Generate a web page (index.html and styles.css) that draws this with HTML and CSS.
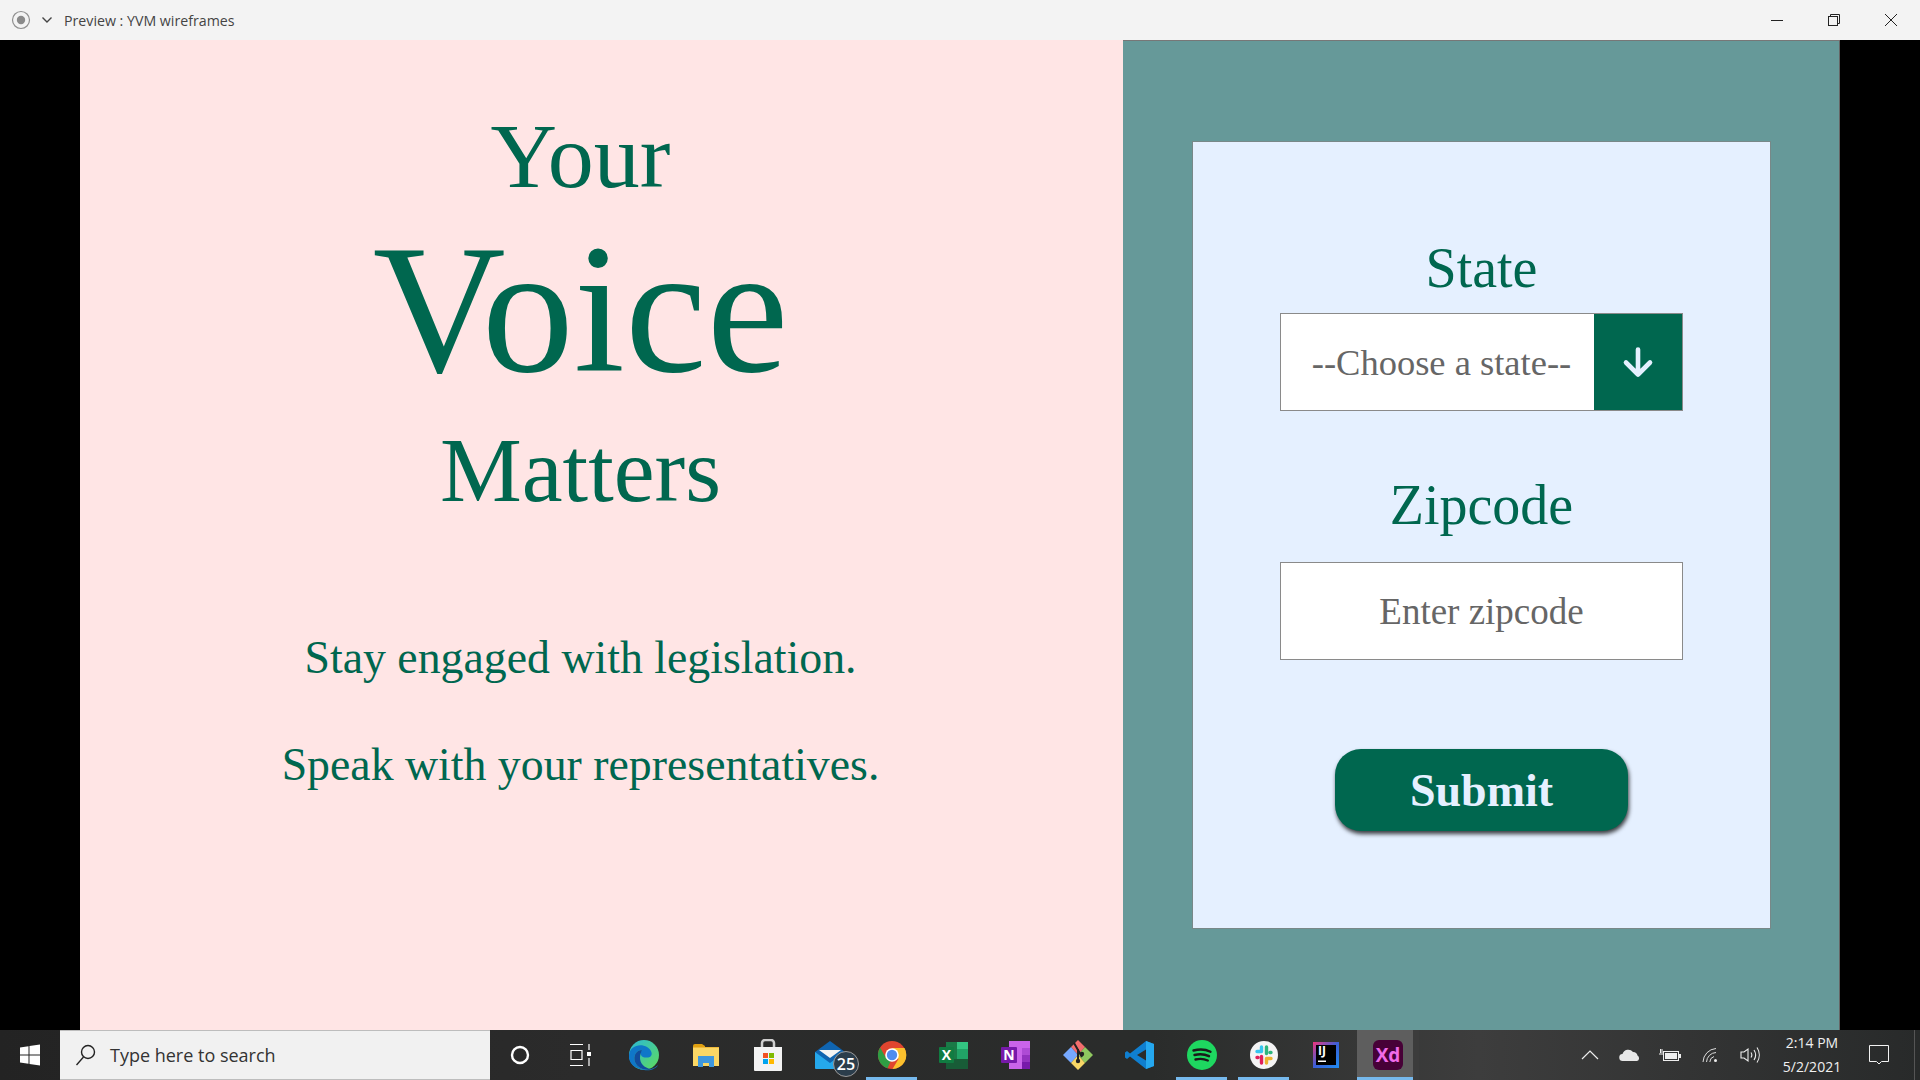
FILE: index.html
```html
<!DOCTYPE html>
<html lang="en">
    <head>
        <meta charset="UTF-8">
        <title>Preview : YVM wireframes</title>
        <link rel="stylesheet" href="styles.css">
    </head>
    <body>
        <header class="titlebar">
            <svg class="record" width="20" height="20" viewBox="0 0 20 20"><circle cx="10" cy="10" r="8.5" fill="none" stroke="#8f8f8f" stroke-width="1.2"/><circle cx="10" cy="10" r="4.2" fill="#8a8a8a"/></svg>
            <svg class="menu-arrow" width="12" height="12" viewBox="0 0 12 12"><path d="M1.5 3.5 6 8l4.5-4.5" fill="none" stroke="#444" stroke-width="1.4"/></svg>
            <span class="title">Preview : YVM wireframes</span>
            <div class="window-buttons">
                <svg width="14" height="14" viewBox="0 0 14 14"><path d="M1 7.500h12" stroke="#222" stroke-width="1"/></svg>
                <svg width="14" height="14" viewBox="0 0 14 14"><path d="M3.500 3V1.500h9v9H11" fill="none" stroke="#222"/><rect x="1.500" y="3.500" width="9" height="9" fill="none" stroke="#222"/></svg>
                <svg width="14" height="14" viewBox="0 0 14 14"><path d="M1 1l12 12M13 1 1 13" stroke="#222" stroke-width="1"/></svg>
            </div>
        </header>

        <main class="stage">
            <section class="hero">
                <h1 class="headline">
                    <span class="line-your">Your</span>
                    <span class="line-voice">Voice</span>
                    <span class="line-matters">Matters</span>
                </h1>
                <p class="tagline tagline-first">Stay engaged with legislation.</p>
                <p class="tagline tagline-second">Speak with your representatives.</p>
            </section>

            <section class="side">
                <form class="card">
                    <h2 class="field-label">State</h2>
                    <div class="field">
                        <span class="field-text field-text-select">--Choose a state--</span>
                        <span class="field-arrow">
                            <svg width="32" height="32" viewBox="0 0 32 32"><path d="M16 3.500v25M4 16.500l12 12 12-12" fill="none" stroke="#e5f0ff" stroke-width="4.600" stroke-linecap="round" stroke-linejoin="round"/></svg>
                        </span>
                    </div>
                    <h2 class="field-label field-label-zip">Zipcode</h2>
                    <div class="field">
                        <span class="field-text">Enter zipcode</span>
                    </div>
                    <button class="submit" type="button">Submit</button>
                </form>
            </section>
        </main>

        <footer class="taskbar">
            <div class="start">
                <svg width="22" height="22" viewBox="0 0 22 22"><path d="M1 3.500 9.500 2.300v8.200H1zM10.500 2.100 21 .6v9.900H10.500zM1 11.500h8.500v8.200L1 18.500zM10.500 11.500H21v9.900l-10.500-1.500z" fill="#fff"/></svg>
            </div>
            <div class="search">
                <svg width="22" height="24" viewBox="0 0 22 24"><circle cx="13" cy="9" r="6.500" fill="none" stroke="#222" stroke-width="1.400"/><path d="M8.500 14 1.500 22" stroke="#222" stroke-width="1.400"/></svg>
                <span>Type here to search</span>
            </div>
            <div class="task-tools">
                <div class="tool">
                    <svg width="20" height="20" viewBox="0 0 20 20"><circle cx="10" cy="10" r="8" fill="none" stroke="#fff" stroke-width="2.400"/></svg>
                </div>
                <div class="tool tool-view">
                    <svg width="22" height="24" viewBox="0 0 22 24"><path d="M1 1.500h13M1 22.500h13M2 7.500h11v9H2zM20 1v6M20 15v8" fill="none" stroke="#fff" stroke-width="1.200"/><rect x="18" y="9" width="4" height="4" fill="#fff"/></svg>
                </div>
            </div>
            <div class="apps">
                <div class="app">
                    <svg width="32" height="32" viewBox="0 0 32 32">
                        <defs>
                            <linearGradient id="edgeTop" x1="0" y1="0" x2="1" y2="1"><stop offset="0" stop-color="#2bb8d8"/><stop offset="1" stop-color="#5fdc5a"/></linearGradient>
                        </defs>
                        <circle cx="16" cy="16" r="15" fill="url(#edgeTop)"/>
                        <path d="M1 16C2 7 12 4 19 8c5 3 6 8 3 10-3 1-8 1-9-2-1-2 0-4 1-5-6 0-9 6-7 12 2 5 8 9 16 7 3-1 5-2 7-4-2 4-8 6-14 5C7 30 0 24 1 16z" fill="#0f77c8"/>
                        <path d="M14 11c-6 0-9 6-7 12 2 5 8 9 16 7-7-1-11-6-11-11 0-3 1-6 2-8z" fill="#114c9c"/>
                    </svg>
                </div>
                <div class="app">
                    <svg width="28" height="24" viewBox="0 0 28 24"><path d="M1 3a2 2 0 0 1 2-2h7l3 2v3H1z" fill="#e0a010"/><path d="M1 4h26v19H1z" fill="#fbd765"/><path d="M1 4h26v1H1z" fill="#f0b93a"/><path d="M6 13h16v11h-5v-4h-6v4H6z" fill="#3f97dd"/></svg>
                </div>
                <div class="app">
                    <svg width="30" height="32" viewBox="0 0 30 32"><path d="M9 9V4a3 3 0 0 1 3-3h6a3 3 0 0 1 3 3v5" fill="none" stroke="#cfcfcf" stroke-width="2.500"/><path d="M1 8h28v23a1 1 0 0 1-1 1H2a1 1 0 0 1-1-1z" fill="#f3f3f3"/><rect x="10" y="14" width="5" height="5" fill="#f25022"/><rect x="16" y="14" width="5" height="5" fill="#7fba00"/><rect x="10" y="20" width="5" height="5" fill="#00a4ef"/><rect x="16" y="20" width="5" height="5" fill="#ffb900"/></svg>
                </div>
                <div class="app">
                    <svg width="32" height="28" viewBox="0 0 32 28"><path d="M16 0 31 11v16H1V11z" fill="#0f64b0"/><path d="M5 9h22l-11 8z" fill="#f4f4f4"/><path d="M1 11l15 11 15-11v16a1 1 0 0 1-1 1H2a1 1 0 0 1-1-1z" fill="#25a8ec"/></svg>
                    <span class="mail-badge">25</span>
                </div>
                <div class="app app-open">
                    <svg width="30" height="30" viewBox="0 0 30 30"><circle cx="15" cy="15" r="14" fill="#e0452f"/><path d="M15 8h12.500a14 14 0 0 1-12 21l6-10z" fill="#fbc02d"/><path d="M3.100 7.500 9 18l6 0-4.500 10.300A14 14 0 0 1 3.100 7.500z" fill="#2f9e44"/><circle cx="15" cy="15" r="6.800" fill="#fff"/><circle cx="15" cy="15" r="5.200" fill="#4f8cf0"/></svg>
                </div>
                <div class="app">
                    <svg width="30" height="28" viewBox="0 0 30 28"><path d="M7 1h22v26a1 1 0 0 1-1 1H8a1 1 0 0 1-1-1z" fill="#1a7a47"/><path d="M18 1h11v7H18z" fill="#33c481"/><path d="M18 8h11v10H18z" fill="#21a366"/><path d="M7 18h22v10H7z" fill="#185c37"/><rect x="0" y="6" width="15" height="16" rx="1" fill="#107c41"/><text x="7.500" y="19" class="badge-letter">X</text></svg>
                </div>
                <div class="app">
                    <svg width="30" height="30" viewBox="0 0 30 30"><path d="M8 1h21v27a1 1 0 0 1-1 1H8z" fill="#ca64ea"/><path d="M21 8h8v7h-8z" fill="#ae4bd5"/><path d="M21 15h8v7h-8z" fill="#9332bf"/><path d="M21 22h8v7h-8z" fill="#7719aa"/><rect x="0" y="7" width="16" height="16" rx="1" fill="#7719aa"/><text x="8" y="20" class="badge-letter">N</text></svg>
                </div>
                <div class="app">
                    <svg width="30" height="30" viewBox="0 0 30 30"><path d="M15 0 22 7 15 15 8 7z" fill="#f26d6d"/><path d="M0 15 8 7 15 15 8 23z" fill="#76a9ff"/><path d="M30 15 22 7 15 15 22 23z" fill="#8fc860"/><path d="M15 30 8 23 15 15 22 23z" fill="#f7d766"/><path d="M11 3l8 14M15 9v12" stroke="#222" stroke-width="2"/><circle cx="15" cy="21" r="2.200" fill="#222"/><circle cx="19" cy="14" r="2.200" fill="#222"/></svg>
                </div>
                <div class="app">
                    <svg width="30" height="30" viewBox="0 0 30 30"><path d="M21 1 29 4V26L21 29 5 16.500 2 19 0 17.500V12.500L2 11 5 13.500zM21 9.500 12 15l9 5.500z" fill="#0f7fd0" fill-rule="evenodd"/><path d="M21 1 29 4V26L21 29z" fill="#25a8ef"/></svg>
                </div>
                <div class="app app-open">
                    <svg width="30" height="30" viewBox="0 0 30 30"><circle cx="15" cy="15" r="15" fill="#1ed760"/><path d="M6.500 10.500c6-1.700 12-1.300 17 1.200M7.500 15c5-1.300 10-1 14.500 1.200M8.500 19.500c4-1 8.500-.8 12.300 1" fill="none" stroke="#1a1a1a" stroke-width="2.400" stroke-linecap="round"/></svg>
                </div>
                <div class="app app-open">
                    <svg width="28" height="28" viewBox="0 0 28 28"><circle cx="14" cy="14" r="14" fill="#f4f4f4"/><g stroke-width="3.400" stroke-linecap="round"><path d="M11.500 6v4.500M11.500 10.500H7" stroke="#36c5f0"/><path d="M16.500 6v6.500M21 11.500h-1" stroke="#2eb67d"/><path d="M16.500 22v-4.500M16.500 17.500H21" stroke="#ecb22e"/><path d="M11.500 22v-6.500M7 16.500h1" stroke="#e01e5a"/></g></svg>
                </div>
                <div class="app">
                    <svg width="26" height="26" viewBox="0 0 26 26"><defs><linearGradient id="ijEdge" x1="0" y1="0" x2="1" y2="1"><stop offset="0" stop-color="#f0357c"/><stop offset="0.500" stop-color="#3a5fd8"/><stop offset="1" stop-color="#1f8cf0"/></linearGradient></defs><rect width="26" height="26" fill="url(#ijEdge)"/><rect x="3" y="3" width="20" height="20" fill="#000"/><text x="5" y="13" class="ij-letters">IJ</text><rect x="5" y="18.500" width="8" height="1.500" fill="#fff"/></svg>
                </div>
                <div class="app app-active">
                    <svg width="30" height="30" viewBox="0 0 30 30"><rect width="30" height="30" rx="6" fill="#470137"/><text x="15" y="22" class="xd-letters">Xd</text></svg>
                </div>
            </div>
            <div class="tray">
                <div class="tray-cell"><svg width="18" height="10" viewBox="0 0 18 10"><path d="M1 9l8-8 8 8" fill="none" stroke="#eee" stroke-width="1.200"/></svg></div>
                <div class="tray-cell"><svg width="22" height="14" viewBox="0 0 22 14"><path d="M4 13a3.500 3.500 0 0 1-.5-7A6 6 0 0 1 14 4a4.500 4.500 0 0 1 4.500 3.500A3 3 0 0 1 18 13z" fill="#e8e8e8"/></svg></div>
                <div class="tray-cell"><svg width="22" height="14" viewBox="0 0 22 14"><rect x="4.500" y="3.500" width="15" height="9" fill="none" stroke="#eee"/><rect x="6" y="5" width="12" height="6" fill="#eee"/><rect x="20" y="6" width="2" height="4" fill="#eee"/><path d="M0 6h4M1.500 1v4M3 1v4" stroke="#eee"/></svg></div>
                <div class="tray-cell"><svg width="16" height="16" viewBox="0 0 16 16"><path d="M1 15A14 14 0 0 1 14 1.500M4.500 15A10 10 0 0 1 14 5.500M7.800 15A6 6 0 0 1 12 9.500" fill="none" stroke="#ddd" stroke-width="1"/><circle cx="13.500" cy="13.500" r="1.500" fill="#eee"/></svg></div>
                <div class="tray-cell"><svg width="21" height="18" viewBox="0 0 21 18"><path d="M1 6h3l4-3v12l-4-3H1zM11 6.500c1 1.500 1 3.500 0 5M14 4c2 3 2 7 0 10M17 1.500c3 4.500 3 10.500 0 15" fill="none" stroke="#eee" stroke-width="1.100"/></svg></div>
                <div class="clock">
                    <span>2:14 PM</span>
                    <span>5/2/2021</span>
                </div>
                <div class="notice"><svg width="20" height="20" viewBox="0 0 20 20"><path d="M.5.500h19v16h-7L10 19l-2.500-2.500h-7z" fill="none" stroke="#f2f2f2"/></svg></div>
                <div class="show-desktop"></div>
            </div>
        </footer>
    </body>
</html>
```

FILE: styles.css
```css
html, body {
    margin: 0;
    height: 100%;
}
body {
    display: flex;
    flex-direction: column;
    height: 1080px;
    overflow: hidden;
    background-color: #000;
    font-family: "Liberation Serif", serif;
}

/* window title */
.titlebar {
    display: flex;
    align-items: center;
    height: 40px;
    flex-shrink: 0;
    padding-left: 11px;
    background-color: #f3f3f3;
}
.menu-arrow {
    margin-left: 10px;
}
.title {
    margin-left: 11px;
    color: #444;
    font-family: "Open Sans", sans-serif;
    font-size: 14.200px;
}
.window-buttons {
    display: flex;
    gap: 43px;
    margin-left: auto;
    padding-right: 22px;
}

/* the wireframe itself */
.stage {
    display: flex;
    flex: 1;
    padding: 0 80px;
    min-height: 0;
}
.hero {
    box-sizing: border-box;
    width: 1043px;
    padding-right: 42px;
    background-color: #ffe5e5;
    color: #00674f;
    text-align: center;
}
.headline {
    display: flex;
    flex-direction: column;
    margin: 0;
    padding-top: 68px;
    font-weight: normal;
}
.line-your,
.line-matters {
    font-size: 92px;
    line-height: 96px;
}
.line-voice {
    margin-top: 10px;
    font-size: 184px;
    line-height: 190px;
}
.line-matters {
    margin-top: 18px;
}
.tagline {
    margin: 0;
    font-size: 45.800px;
    line-height: 54px;
}
.tagline-first {
    margin-top: 113px;
}
.tagline-second {
    margin-top: 53px;
}

.side {
    flex: 1;
    box-sizing: border-box;
    padding: 100px 68px 0 69px;
    background-color: #669999;
    border-top: 1px solid #777;
    border-right: 1px solid #666;
}
.card {
    display: flex;
    flex-direction: column;
    align-items: center;
    box-sizing: border-box;
    height: 788px;
    padding-top: 81px;
    background-color: #e5f0ff;
    border: 1px solid #788888;
    color: #00674f;
}
.field-label {
    margin: 0;
    font-size: 56px;
    font-weight: normal;
    line-height: 90px;
}
.field-label-zip {
    margin-top: 49px;
    margin-bottom: 12px;
}
.field {
    display: flex;
    box-sizing: border-box;
    width: 403px;
    height: 98px;
    background-color: #fff;
    border: 1px solid #8a8a8a;
    color: #666;
    font-size: 37px;
}
.field-text {
    flex: 1;
    align-self: center;
    text-align: center;
}
.field-text-select {
    padding-left: 8px;
    font-size: 36.500px;
}
.field-arrow {
    display: flex;
    align-items: center;
    justify-content: center;
    width: 88px;
    background-color: #00674f;
}
.submit {
    width: 293px;
    height: 82px;
    margin-top: 89px;
    padding: 0;
    background-color: #00674f;
    border: none;
    border-radius: 26px;
    box-shadow: 1px 3px 4px rgba(0, 0, 0, 0.75);
    color: #e5f0ff;
    font-family: "Liberation Serif", serif;
    font-size: 46px;
    font-weight: bold;
}

/* windows taskbar */
.taskbar {
    display: flex;
    align-items: stretch;
    height: 50px;
    flex-shrink: 0;
    background: linear-gradient(90deg, #232323 0, #2b2b2b 30%, #2a2c2b 60%, #3d3d3d 77%, #282a2a 100%);
    color: #f0f0f0;
    font-family: "Open Sans", sans-serif;
}
.start {
    display: flex;
    align-items: center;
    justify-content: center;
    flex-shrink: 0;
    width: 60px;
}
.search {
    display: flex;
    align-items: center;
    flex-shrink: 0;
    gap: 13px;
    box-sizing: border-box;
    width: 430px;
    padding-left: 15px;
    background-color: #f1f1f1;
    border-top: 1px solid #bdbdbd;
    border-bottom: 1px solid #bdbdbd;
    color: #333;
    font-size: 18px;
}
.task-tools {
    display: flex;
    flex-shrink: 0;
    width: 123px;
}
.tool {
    display: flex;
    flex: 1;
    align-items: center;
    justify-content: center;
}
.tool-view {
    padding-right: 3px;
}
.apps {
    display: flex;
    flex-shrink: 0;
}
.app {
    position: relative;
    display: flex;
    align-items: center;
    justify-content: center;
    width: 62px;
}
.app-open::after,
.app-active::after {
    content: "";
    position: absolute;
    left: 5px;
    right: 6px;
    bottom: 0;
    height: 3px;
    background-color: #76b9ed;
}
.app-active {
    background: linear-gradient(90deg, #5e5e5e 0, #5e5e5e 90%, #3c3c3c 90%, #3c3c3c 100%);
}
.app-active::after {
    left: 0;
    right: 6px;
}
.mail-badge {
    position: absolute;
    top: 21px;
    left: 34px;
    width: 24px;
    height: 24px;
    background-color: #2b3d4b;
    border: 1px solid #9a9a9a;
    border-radius: 50%;
    color: #fff;
    font-size: 16px;
    font-weight: 600;
    line-height: 24px;
    text-align: center;
}
.badge-letter {
    fill: #fff;
    font-family: "Open Sans", sans-serif;
    font-size: 14px;
    font-weight: 700;
    text-anchor: middle;
}
.ij-letters {
    fill: #fff;
    font-family: "Open Sans", sans-serif;
    font-size: 12px;
    font-weight: 700;
}
.xd-letters {
    fill: #f06ae8;
    font-family: "Open Sans", sans-serif;
    font-size: 19px;
    font-weight: 700;
    text-anchor: middle;
}
.tray {
    display: flex;
    align-items: center;
    flex: 1;
    padding-left: 151px;
}
.tray-cell {
    display: flex;
    align-items: center;
    justify-content: center;
    width: 40px;
}
.clock {
    display: flex;
    flex-direction: column;
    align-items: center;
    width: 84px;
    font-size: 14px;
    line-height: 24px;
}
.notice {
    display: flex;
    justify-content: center;
    width: 50px;
}
.show-desktop {
    align-self: stretch;
    width: 1px;
    margin-left: 10px;
    background-color: #555;
}
```
